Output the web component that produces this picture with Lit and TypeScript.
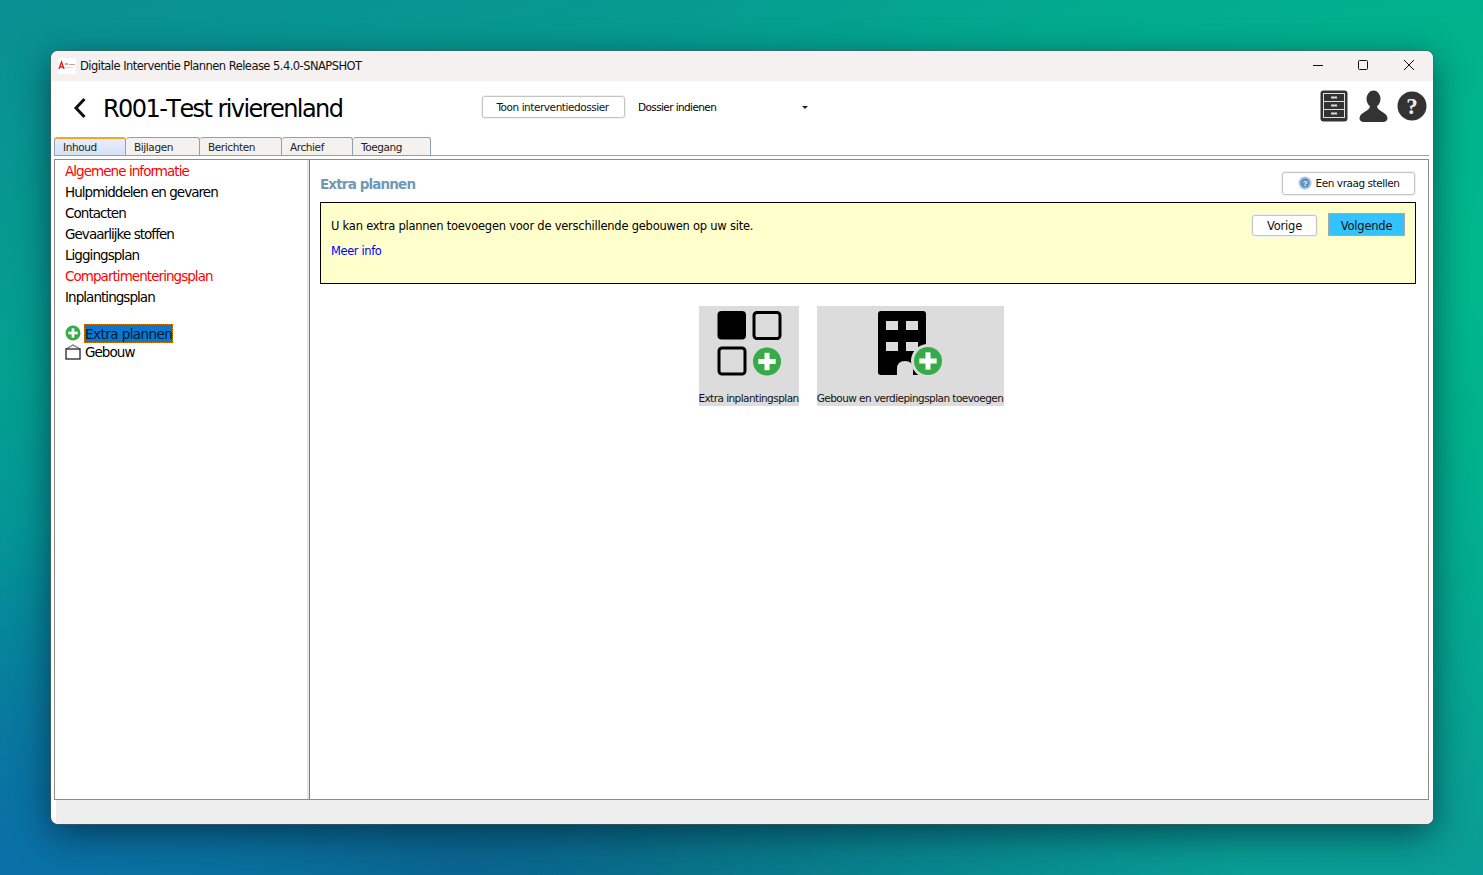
import { LitElement, html, css, svg } from "lit"
import { customElement } from "lit/decorators.js"

const plus = (cx: number, cy: number, r: number) => svg`
  <circle cx=${cx} cy=${cy} r=${r} fill="#37ab47" />
  <rect x=${cx - r * 0.62} y=${cy - r * 0.18} width=${r * 1.24} height=${r * 0.36} fill="#fff" />
  <rect x=${cx - r * 0.18} y=${cy - r * 0.62} width=${r * 0.36} height=${r * 1.24} fill="#fff" />
`

const navItems = [
  { label: "Algemene informatie", red: true },
  { label: "Hulpmiddelen en gevaren" },
  { label: "Contacten" },
  { label: "Gevaarlijke stoffen" },
  { label: "Liggingsplan" },
  { label: "Compartimenteringsplan", red: true },
  { label: "Inplantingsplan" },
]

const tabs = ["Inhoud", "Bijlagen", "Berichten", "Archief", "Toegang"]
const tabWidths = [72, 74, 82, 71, 78]

@customElement("app-root")
export class AppRoot extends LitElement {
  static styles = css`
    :host {
      display: block;
      position: relative;
      width: 1483px;
      height: 875px;
      overflow: hidden;
      font-family: "DejaVu Sans", Tahoma, sans-serif;
      color: #000;
      background:
        radial-gradient(ellipse 700px 500px at 0% 100%, #0a6fa8 0%, rgba(10, 111, 168, 0) 100%),
        radial-gradient(ellipse 800px 400px at 30% 100%, #0a5f85 0%, rgba(10, 95, 133, 0) 100%),
        radial-gradient(ellipse 900px 600px at 100% 30%, #00b88c 0%, rgba(0, 184, 140, 0) 100%),
        linear-gradient(160deg, #0a8f92 0%, #00ab8e 45%, #0a9c96 100%);
    }

    .window {
      position: absolute;
      left: 51px;
      top: 51px;
      width: 1382px;
      height: 773px;
      display: flex;
      flex-direction: column;
      background: #fff;
      border-radius: 7px;
      overflow: hidden;
      box-shadow: 0 0 0 1px rgba(90, 90, 90, 0.5), 0 10px 36px rgba(0, 25, 45, 0.62);
    }

    .titlebar {
      height: 30px;
      flex: none;
      display: flex;
      align-items: center;
      background: #f4f1f0;
      font-size: 11.5px;
      color: #111;
      padding: 0 1px 0 7px;
    }

    .appicon {
      width: 18px;
      height: 16px;
      margin-right: 4px;
      flex: none;
    }

    .titlebar .title {
      flex: 1;
      letter-spacing: -0.54px;
      white-space: nowrap;
    }

    .winbtn {
      width: 46px;
      height: 28px;
      margin-bottom: 2px;
      display: flex;
      align-items: center;
      justify-content: center;
    }

    .header {
      height: 56px;
      flex: none;
      display: flex;
      align-items: center;
      position: relative;
    }

    .back {
      margin: -2px 0 0 22px;
      width: 14px;
      height: 22px;
      flex: none;
    }

    h1 {
      margin: 0 0 0 16px;
      width: 379px;
      flex: none;
      font-size: 24px;
      font-weight: 400;
      letter-spacing: -1.57px;
      white-space: nowrap;
      font-kerning: none;
    }

    .btn {
      box-sizing: border-box;
      border: 1px solid #c4c4c4;
      border-radius: 3px;
      background: #fff;
      box-shadow: 0 0 0 1px #f0f0f0;
      font-size: 10.5px;
      display: flex;
      align-items: center;
      justify-content: center;
      letter-spacing: -0.45px;
      color: #111;
    }

    .toon {
      width: 143px;
      height: 22px;
      margin-top: -4px;
      padding-right: 2px;
    }

    .select {
      margin: -4px 0 0 13px;
      width: 170px;
      display: flex;
      align-items: center;
      justify-content: space-between;
      font-size: 10.5px;
      letter-spacing: -0.6px;
    }

    .caret {
      width: 0;
      height: 0;
      border: 3px solid transparent;
      border-top: 3px solid #222;
      border-bottom: 0;
    }

    .tools {
      margin-left: auto;
      margin-right: 6px;
      margin-top: -6px;
      display: flex;
      align-items: center;
    }

    .tools .cabinet {
      margin-right: 11px;
    }

    .tools .person {
      margin-right: 9px;
    }

    .tabs {
      height: 18px;
      flex: none;
      display: flex;
      padding-left: 3px;
    }

    .tab {
      box-sizing: border-box;
      height: 19px;
      border: 1px solid #8aa2b8;
      border-bottom: none;
      border-left: none;
      border-radius: 3px 3px 0 0;
      background: #f4f1ee;
      font-size: 10.5px;
      line-height: 19px;
      padding-left: 8px;
      color: #222;
      letter-spacing: -0.4px;
    }

    .tab.active {
      border: 1px solid #8aa2b8;
      border-top: 2px solid #f5a623;
      border-bottom: none;
      background: linear-gradient(#e8eefa, #d5e0f5);
      line-height: 17px;
    }

    .frame {
      margin: 0 4px 0 3px;
      flex: 1;
      min-height: 0;
      border-top: 1px solid #8aa2b8;
      padding-top: 3px;
      display: flex;
      flex-direction: column;
    }

    .panes {
      flex: 1;
      min-height: 0;
      display: flex;
      border: 1px solid #8c8c8c;
    }

    .nav {
      width: 254px;
      flex: none;
      box-sizing: border-box;
      border-right: 2px solid #e6e6e6;
      padding: 1px 0 0 10px;
      font-size: 13.5px;
      letter-spacing: -0.95px;
    }

    .nav-item {
      height: 21px;
      line-height: 21px;
      white-space: nowrap;
    }

    .nav-item.red {
      color: #f00;
    }

    .tree {
      margin-top: 15px;
    }

    .tree-row {
      height: 19px;
      display: flex;
      align-items: center;
      gap: 4px;
    }

    .tree-row svg {
      width: 16px;
      height: 16px;
      flex: none;
    }

    .selected {
      box-sizing: border-box;
      background: #0a78d0;
      border: 1px dotted #e87a00;
      margin: 1px 0 0 -1px;
      line-height: 18px;
      height: 19px;
      width: 89px;
      color: #001a33;
      letter-spacing: -0.55px;
      white-space: nowrap;
    }

    .main {
      flex: 1;
      min-width: 0;
      border-left: 1px solid #7f7f7f;
      padding: 11px 12px 0 10px;
    }

    .main-head {
      height: 24px;
      display: flex;
      align-items: center;
      justify-content: space-between;
    }

    h2 {
      margin: 2px 0 0;
      font-size: 13.5px;
      font-weight: 700;
      color: #7198b6;
      letter-spacing: -0.85px;
    }

    .ask {
      width: 133px;
      height: 23px;
      gap: 4px;
      margin-right: 1px;
    }

    .notice {
      box-sizing: border-box;
      margin-top: 7px;
      height: 82px;
      border: 1px solid #000;
      background: #ffffcc;
      padding: 10px 10px 0 10px;
      display: flex;
      justify-content: space-between;
      font-size: 11.5px;
      letter-spacing: -0.23px;
    }

    .notice p {
      margin: 6px 0 0;
    }

    .notice a {
      display: block;
      margin-top: 11px;
      color: #0000ff;
      letter-spacing: -0.4px;
    }

    .notice-btns {
      display: flex;
      gap: 11px;
      align-items: flex-end;
      height: 23px;
    }

    .vorige {
      width: 65px;
      height: 21px;
      font-size: 11.5px;
      letter-spacing: -0.2px;
    }

    .volgende {
      width: 77px;
      height: 23px;
      padding-top: 2px;
      background: #33c3ff;
      border: 1px solid #a8a8a8;
      border-radius: 0;
      box-shadow: none;
      font-size: 11.5px;
      letter-spacing: -0.2px;
    }

    .tiles {
      margin-top: 22px;
      display: flex;
      justify-content: center;
      gap: 18px;
      padding-right: 34px;
    }

    .tile {
      background: #dcdcdc;
      height: 100px;
      display: flex;
      flex-direction: column;
      align-items: center;
      font-size: 10.5px;
      letter-spacing: -0.55px;
      white-space: nowrap;
    }

    .tile svg {
      display: block;
      flex: none;
    }

    .tile span {
      margin-top: 14px;
      color: #111;
    }

    .statusbar {
      height: 24px;
      flex: none;
      margin-left: 5px;
      background: #eeeeee;
    }
  `

  private renderBuildingIcon() {
    return svg`
      <path d="M1 5 L8 1 L15 5" fill="none" stroke="#777" stroke-width="1.2" />
      <rect x="1" y="5" width="14" height="10" fill="none" stroke="#333" stroke-width="1.4" />
    `
  }

  render() {
    return html`
      <div class="window">
        <div class="titlebar">
          <svg class="appicon" viewBox="0 0 18 16">
            <rect width="18" height="16" fill="#fff" />
            <path d="M1 11 L3.5 4 L6 11 M2 9 H5" stroke="#e0202a" stroke-width="1.4" fill="none" />
            <rect x="7" y="5" width="3" height="2" fill="#d8a0a0" />
            <rect x="11" y="6" width="6" height="1" fill="#c9a0a0" />
            <rect x="7" y="9" width="8" height="1" fill="#ddd" />
          </svg>
          <span class="title">Digitale Interventie Plannen Release 5.4.0-SNAPSHOT</span>
          <div class="winbtn">
            <svg width="12" height="12"><path d="M2 6.5 H12" stroke="#111" stroke-width="1" /></svg>
          </div>
          <div class="winbtn">
            <svg width="12" height="12"><rect x="1.5" y="1.5" width="9" height="9" rx="1" fill="none" stroke="#111" /></svg>
          </div>
          <div class="winbtn">
            <svg width="12" height="12"><path d="M1 1 L11 11 M11 1 L1 11" stroke="#111" stroke-width="1" /></svg>
          </div>
        </div>

        <div class="header">
          <svg class="back" viewBox="0 0 14 22">
            <path d="M11.5 2 L3 11 L11.5 20" fill="none" stroke="#111" stroke-width="3" />
          </svg>
          <h1>R001-Test rivierenland</h1>
          <div class="btn toon">Toon interventiedossier</div>
          <div class="select"><span>Dossier indienen</span><span class="caret"></span></div>
          <div class="tools">
            <svg class="cabinet" width="28" height="32" viewBox="0 0 28 32">
              <rect x="0.5" y="0.5" width="27" height="31" rx="3" fill="#333" />
              <rect x="3.5" y="3.5" width="21" height="8" fill="#333" stroke="#ddd" />
              <rect x="3.5" y="11.5" width="21" height="8" fill="#333" stroke="#ddd" />
              <rect x="3.5" y="19.5" width="21" height="8" fill="#333" stroke="#ddd" />
              <rect x="11" y="6.5" width="6" height="2" fill="#ddd" />
              <rect x="11" y="14.5" width="6" height="2" fill="#ddd" />
              <rect x="11" y="22.5" width="6" height="2" fill="#ddd" />
            </svg>
            <svg class="person" width="29" height="32" viewBox="0 0 29 32">
              <ellipse cx="14.5" cy="9" rx="7" ry="8.5" fill="#333" />
              <path d="M11 16 H18 C18 21 28 22 28.5 28 C28.5 31 26 32 24 32 H5 C3 32 0.5 31 0.5 28 C1 22 11 21 11 16 Z" fill="#333" />
            </svg>
            <svg width="30" height="30" viewBox="0 0 30 30">
              <circle cx="15" cy="15" r="14.5" fill="#333" />
              <text x="15" y="22.5" text-anchor="middle" font-family="Liberation Serif" font-weight="700" font-size="23" fill="#eee">?</text>
            </svg>
          </div>
        </div>

        <div class="tabs">
          ${tabs.map(
            (t, i) => html`<div class="tab ${i === 0 ? "active" : ""}" style="width:${tabWidths[i]}px">${t}</div>`,
          )}
        </div>

        <div class="frame">
          <div class="panes">
            <div class="nav">
              ${navItems.map(
                (n) => html`<div class="nav-item ${n.red ? "red" : ""}">${n.label}</div>`,
              )}
              <div class="tree">
                <div class="tree-row">
                  <svg viewBox="0 0 16 16">${plus(8, 8, 7.5)}</svg>
                  <span class="selected">Extra plannen</span>
                </div>
                <div class="tree-row">
                  <svg viewBox="0 0 16 16">${this.renderBuildingIcon()}</svg>
                  <span>Gebouw</span>
                </div>
              </div>
            </div>

            <div class="main">
              <div class="main-head">
                <h2>Extra plannen</h2>
                <div class="btn ask">
                  <svg width="14" height="14" viewBox="0 0 14 14">
                    <circle cx="7" cy="7" r="6.5" fill="#a6c4e2" />
                    <circle cx="7" cy="7" r="4.5" fill="#5b8fc4" />
                    <text x="7" y="10" text-anchor="middle" font-size="8" font-weight="700" fill="#fff" font-family="Liberation Sans">?</text>
                  </svg>
                  Een vraag stellen
                </div>
              </div>

              <div class="notice">
                <div>
                  <p>U kan extra plannen toevoegen voor de verschillende gebouwen op uw site.</p>
                  <a>Meer info</a>
                </div>
                <div class="notice-btns">
                  <div class="btn vorige">Vorige</div>
                  <div class="btn volgende">Volgende</div>
                </div>
              </div>

              <div class="tiles">
                <div class="tile" style="width:100px">
                  <svg width="100" height="72" viewBox="0 0 100 72">
                    <rect x="18.5" y="5" width="28.5" height="28.5" rx="4" fill="#000" />
                    <rect x="55" y="6.5" width="26" height="26" rx="3" fill="none" stroke="#000" stroke-width="3" />
                    <rect x="20" y="42" width="26" height="26" rx="3" fill="none" stroke="#000" stroke-width="3" />
                    ${plus(68, 55.5, 14)}
                  </svg>
                  <span>Extra inplantingsplan</span>
                </div>
                <div class="tile" style="width:187px">
                  <svg width="187" height="72" viewBox="0 0 187 72">
                    <path d="M64 5 H106 Q109 5 109 8 V69 H96 V63 Q96 55 88 55 Q80 55 80 63 V69 H64 Q61 69 61 66 V8 Q61 5 64 5 Z" fill="#000" />
                    <rect x="69" y="15" width="12" height="9" fill="#dcdcdc" />
                    <rect x="89" y="15" width="12" height="9" fill="#dcdcdc" />
                    <rect x="69" y="36" width="12" height="9" fill="#dcdcdc" />
                    <rect x="89" y="36" width="12" height="9" fill="#dcdcdc" />
                    <circle cx="111" cy="55" r="17" fill="#dcdcdc" />
                    ${plus(111, 55, 14)}
                  </svg>
                  <span>Gebouw en verdiepingsplan toevoegen</span>
                </div>
              </div>
            </div>
          </div>
        </div>

        <div class="statusbar"></div>
      </div>
    `
  }
}
